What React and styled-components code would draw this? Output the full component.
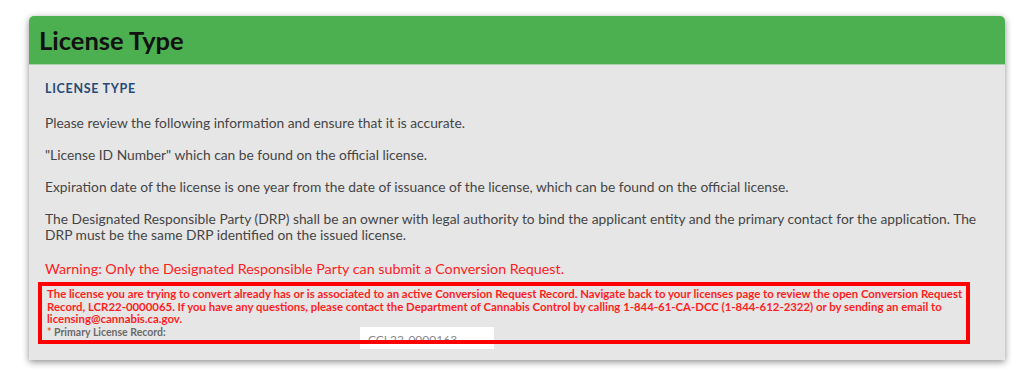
import React from "react";
import styled, { createGlobalStyle } from "styled-components";

const GlobalStyle = createGlobalStyle`
  html, body {
    margin: 0;
    padding: 0;
    background: #ffffff;
  }
  body {
    font-family: Lato, "Open Sans", "Liberation Sans", sans-serif;
  }
`;

const Page = styled.div`
  width: 1024px;
  height: 385px;
  padding: 16px 0 0 29px;
  box-sizing: border-box;
`;

const Panel = styled.section`
  width: 976px;
  background: #e6e6e6;
  border-radius: 5px 5px 0 0;
  box-shadow: 0 2px 7px rgba(0, 0, 0, 0.45);
`;

const Header = styled.header`
  height: 49px;
  background: #4caf50;
  border-radius: 5px 5px 0 0;
  border-bottom: 1px solid #a9d3aa;
  box-sizing: border-box;
  display: flex;
  align-items: center;
  padding: 0 10px;
`;

const HeaderTitle = styled.h1`
  margin: 0;
  font-size: 25.5px;
  font-weight: 700;
  color: #111;
`;

const Body = styled.div`
  padding: 17px 16px 16px 16px;
`;

const SectionTitle = styled.h2`
  margin: 0 0 19px;
  font-size: 12.5px;
  line-height: 14px;
  font-weight: 700;
  color: #284a78;
  letter-spacing: 0.7px;
`;

const Paragraph = styled.p`
  margin: 0 0 16px;
  font-size: 13.8px;
  line-height: 16px;
  color: ${(p) => (p.$warning ? "#ff2020" : "#454545")};
  ${(p) => p.$warning && "font-size: 14.3px; margin-top: 18px; margin-bottom: 5px;"}
`;

const ErrorBox = styled.div`
  position: relative;
  margin-left: -7px;
  width: 932px;
  box-sizing: border-box;
  padding: 6px 8px 4px 9px;

  &::after {
    content: "";
    position: absolute;
    inset: 0;
    border: 4px solid #ff0000;
    pointer-events: none;
    z-index: 2;
  }
`;

const ErrorText = styled.div`
  font-size: 11.4px;
  line-height: 12.5px;
  font-weight: 700;
  color: #ff1e1e;
  white-space: nowrap;
`;

const FieldRow = styled.div`
  display: flex;
  align-items: flex-start;
  height: 14px;
`;

const FieldLabel = styled.label`
  width: 313px;
  flex: none;
  font-size: 10.5px;
  line-height: 13px;
  font-weight: 700;
  color: #6a6a6a;
`;

const Required = styled.span`
  color: #e05a2a;
`;

const Input = styled.div`
  position: relative;
  z-index: 1;
  width: 134px;
  height: 22px;
  margin-top: 1px;
  background: #ffffff;
  box-sizing: border-box;
  padding: 5px 8px 0;
  font-size: 12px;
  line-height: 16px;
  color: #8a8a8a;
`;

export default function App() {
  return (
    <>
      <GlobalStyle />
      <Page>
        <Panel>
          <Header>
            <HeaderTitle>License Type</HeaderTitle>
          </Header>
          <Body>
            <SectionTitle>LICENSE TYPE</SectionTitle>
            <Paragraph>
              Please review the following information and ensure that it is accurate.
            </Paragraph>
            <Paragraph>
              "License ID Number" which can be found on the official license.
            </Paragraph>
            <Paragraph>
              Expiration date of the license is one year from the date of issuance of the
              license, which can be found on the official license.
            </Paragraph>
            <Paragraph>
              The Designated Responsible Party (DRP) shall be an owner with legal authority to
              bind the applicant entity and the primary contact for the application. The
              <br />
              DRP must be the same DRP identified on the issued license.
            </Paragraph>
            <Paragraph $warning>
              Warning: Only the Designated Responsible Party can submit a Conversion Request.
            </Paragraph>
            <ErrorBox>
              <ErrorText>
                The license you are trying to convert already has or is associated to an active
                Conversion Request Record. Navigate back to your licenses page to review the open
                Conversion Request
                <br />
                Record, LCR22-0000065. If you have any questions, please contact the Department of
                Cannabis Control by calling 1-844-61-CA-DCC (1-844-612-2322) or by sending an email
                to
                <br />
                licensing@cannabis.ca.gov.
              </ErrorText>
              <FieldRow>
                <FieldLabel>
                  <Required>*</Required> Primary License Record:
                </FieldLabel>
                <Input>CCL22-0000163</Input>
              </FieldRow>
            </ErrorBox>
          </Body>
        </Panel>
      </Page>
    </>
  );
}
